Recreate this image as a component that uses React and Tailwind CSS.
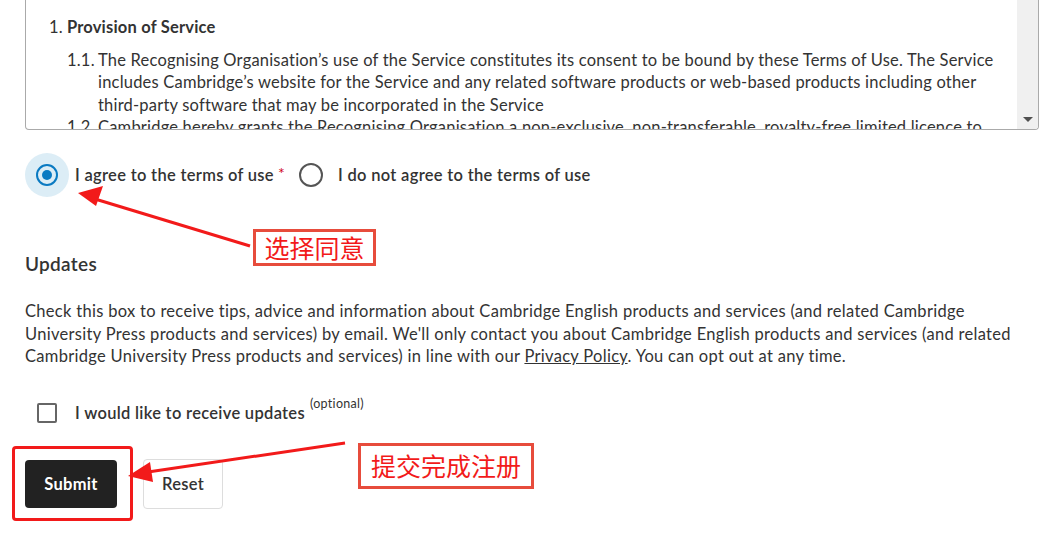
import React from 'react';

const font = { fontFamily: 'Lato, "Liberation Sans", sans-serif' };
const cjk = { fontFamily: '"Noto Sans CJK SC", sans-serif' };

export default function App() {
  return (
    <div className="relative w-[1059px] h-[536px] overflow-hidden bg-white text-[#333] tracking-[0.3px]" style={font}>
      <div className="pl-[25px] pr-[20px]">
        {/* Terms box */}
        <div className="flex h-[130px] border-x border-b border-[#aaa] rounded-b-[4px] overflow-hidden">
          <div className="flex-1 pl-[23px] pt-[16px] text-[16.5px] leading-[22.5px] tracking-[0.2px]">
            <div className="flex gap-[4px]">
              <span>1.</span>
              <span className="font-bold">Provision of Service</span>
            </div>
            <div className="mt-[10px] pl-[18px]">
              <div className="flex">
                <span className="w-[31px] shrink-0">1.1.</span>
                <span className="whitespace-nowrap">
                  The Recognising Organisation’s use of the Service constitutes its consent to be bound by these Terms of Use. The Service<br />
                  includes Cambridge’s website for the Service and any related software products or web-based products including other<br />
                  third-party software that may be incorporated in the Service
                </span>
              </div>
              <div className="flex">
                <span className="w-[31px] shrink-0">1.2.</span>
                <span className="whitespace-nowrap">
                  Cambridge hereby grants the Recognising Organisation a non-exclusive, non-transferable, royalty-free limited licence to
                </span>
              </div>
            </div>
          </div>
          <div className="w-[21px] bg-[#f0f0f0] flex flex-col justify-end items-center pb-[7px]">
            <div className="w-0 h-0 border-l-[5px] border-r-[5px] border-t-[5px] border-l-transparent border-r-transparent border-t-[#505050]" />
          </div>
        </div>

        {/* Radios */}
        <div className="flex items-center mt-[23px] h-[44px]">
          <div className="w-[44px] h-[44px] rounded-full bg-[#dcedf6] flex items-center justify-center">
            <div className="w-[22px] h-[22px] rounded-full border-[2.5px] border-[#0a7ac2] flex items-center justify-center">
              <div className="w-[10px] h-[10px] rounded-full bg-[#0a7ac2]" />
            </div>
          </div>
          <span className="ml-[6px] text-[16.5px] font-semibold">I agree to the terms of use</span>
          <span className="ml-[4px] text-[#d0021b] text-[16px] -mt-[4px]">*</span>
          <div className="ml-[14px] w-[24px] h-[24px] rounded-full border-2 border-[#555]" />
          <span className="ml-[15px] text-[16.5px] font-semibold">I do not agree to the terms of use</span>
        </div>

        {/* Updates */}
        <h2 className="mt-[55px] text-[19px] font-semibold leading-[24px]">Updates</h2>
        <p className="mt-[24px] text-[16.5px] leading-[22.5px] whitespace-nowrap">
          Check this box to receive tips, advice and information about Cambridge English products and services (and related Cambridge<br />
          University Press products and services) by email. We'll only contact you about Cambridge English products and services (and related<br />
          Cambridge University Press products and services) in line with our <span className="underline">Privacy Policy</span>. You can opt out at any time.
        </p>

        <div className="flex items-center mt-[33px] pl-[12px]">
          <div className="w-[20px] h-[20px] border-2 border-[#666] rounded-[2px]" />
          <span className="ml-[18px] text-[16.5px] font-semibold">I would like to receive updates</span>
          <span className="ml-[5px] text-[12.5px] self-start -mt-[6px]">(optional)</span>
        </div>

        <div className="flex items-center gap-[26px] mt-[34px]">
          <button className="w-[92px] h-[48px] rounded-[4px] bg-[#222] text-white text-[16.5px] font-bold">Submit</button>
          <button className="w-[80px] h-[50px] rounded-[4px] border border-[#ddd] bg-white text-[16.5px] font-semibold">Reset</button>
        </div>
      </div>

      {/* Annotations */}
      <div className="absolute left-[12px] top-[446px] w-[121px] h-[75px] border-[3px] border-[#f21a1a] rounded-[4px]" />
      <div className="absolute left-[253px] top-[229px] w-[123px] h-[37px] flex items-center justify-center border-[3px] border-[#e74c3c] bg-white text-[#f21a1a] text-[25px] tracking-normal" style={cjk}>
        选择同意
      </div>
      <div className="absolute left-[358px] top-[443px] w-[176px] h-[46px] flex items-center justify-center border-[3px] border-[#e74c3c] bg-white text-[#f21a1a] text-[25px] tracking-normal" style={cjk}>
        提交完成注册
      </div>
      <svg className="absolute left-0 top-0" width="1059" height="536">
        <line x1="250" y1="246" x2="95" y2="199" stroke="#f21a1a" strokeWidth="3" />
        <polygon points="78,193 103,186 96,206" fill="#f21a1a" />
        <line x1="345" y1="443" x2="148" y2="472" stroke="#f21a1a" strokeWidth="3" />
        <polygon points="128,476 150,462 153,482" fill="#f21a1a" />
      </svg>
    </div>
  );
}
